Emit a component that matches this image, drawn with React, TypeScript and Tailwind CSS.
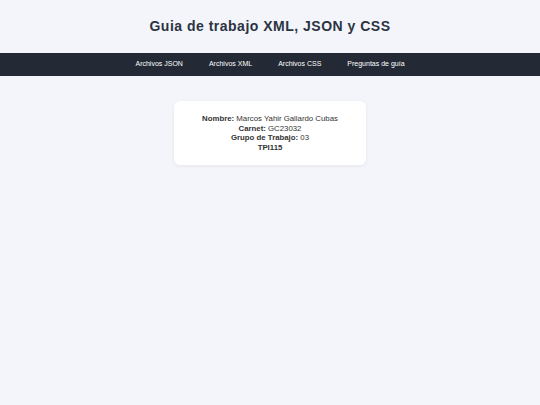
import React from 'react';

const links = ['Archivos JSON', 'Archivos XML', 'Archivos CSS', 'Preguntas de guía'];

export default function App() {
  return (
    <div className="min-h-[405px] bg-[#f4f5fb] font-['Liberation_Sans',Arial,sans-serif]">
      <header className="h-[53px] flex items-center justify-center">
        <h1 className="text-[14px] font-bold tracking-[0.5px] text-[#2b3442]">Guia de trabajo XML, JSON y CSS</h1>
      </header>
      <nav className="h-[23px] bg-[#232a35] flex items-center justify-center gap-[26px]">
        {links.map((l) => (
          <a key={l} className="text-[7px] text-white">{l}</a>
        ))}
      </nav>
      <div className="flex justify-center pt-[25px]">
        <div className="w-[192px] h-[64px] bg-white rounded-[6px] shadow-[0_1px_4px_rgba(0,0,0,0.06)] flex flex-col items-center justify-center text-[7.8px] leading-[9.5px] text-[#333]">
          <p><b>Nombre:</b> Marcos Yahir Gallardo Cubas</p>
          <p><b>Carnet:</b> GC23032</p>
          <p><b>Grupo de Trabajo:</b> 03</p>
          <p><b>TPI115</b></p>
        </div>
      </div>
    </div>
  );
}
